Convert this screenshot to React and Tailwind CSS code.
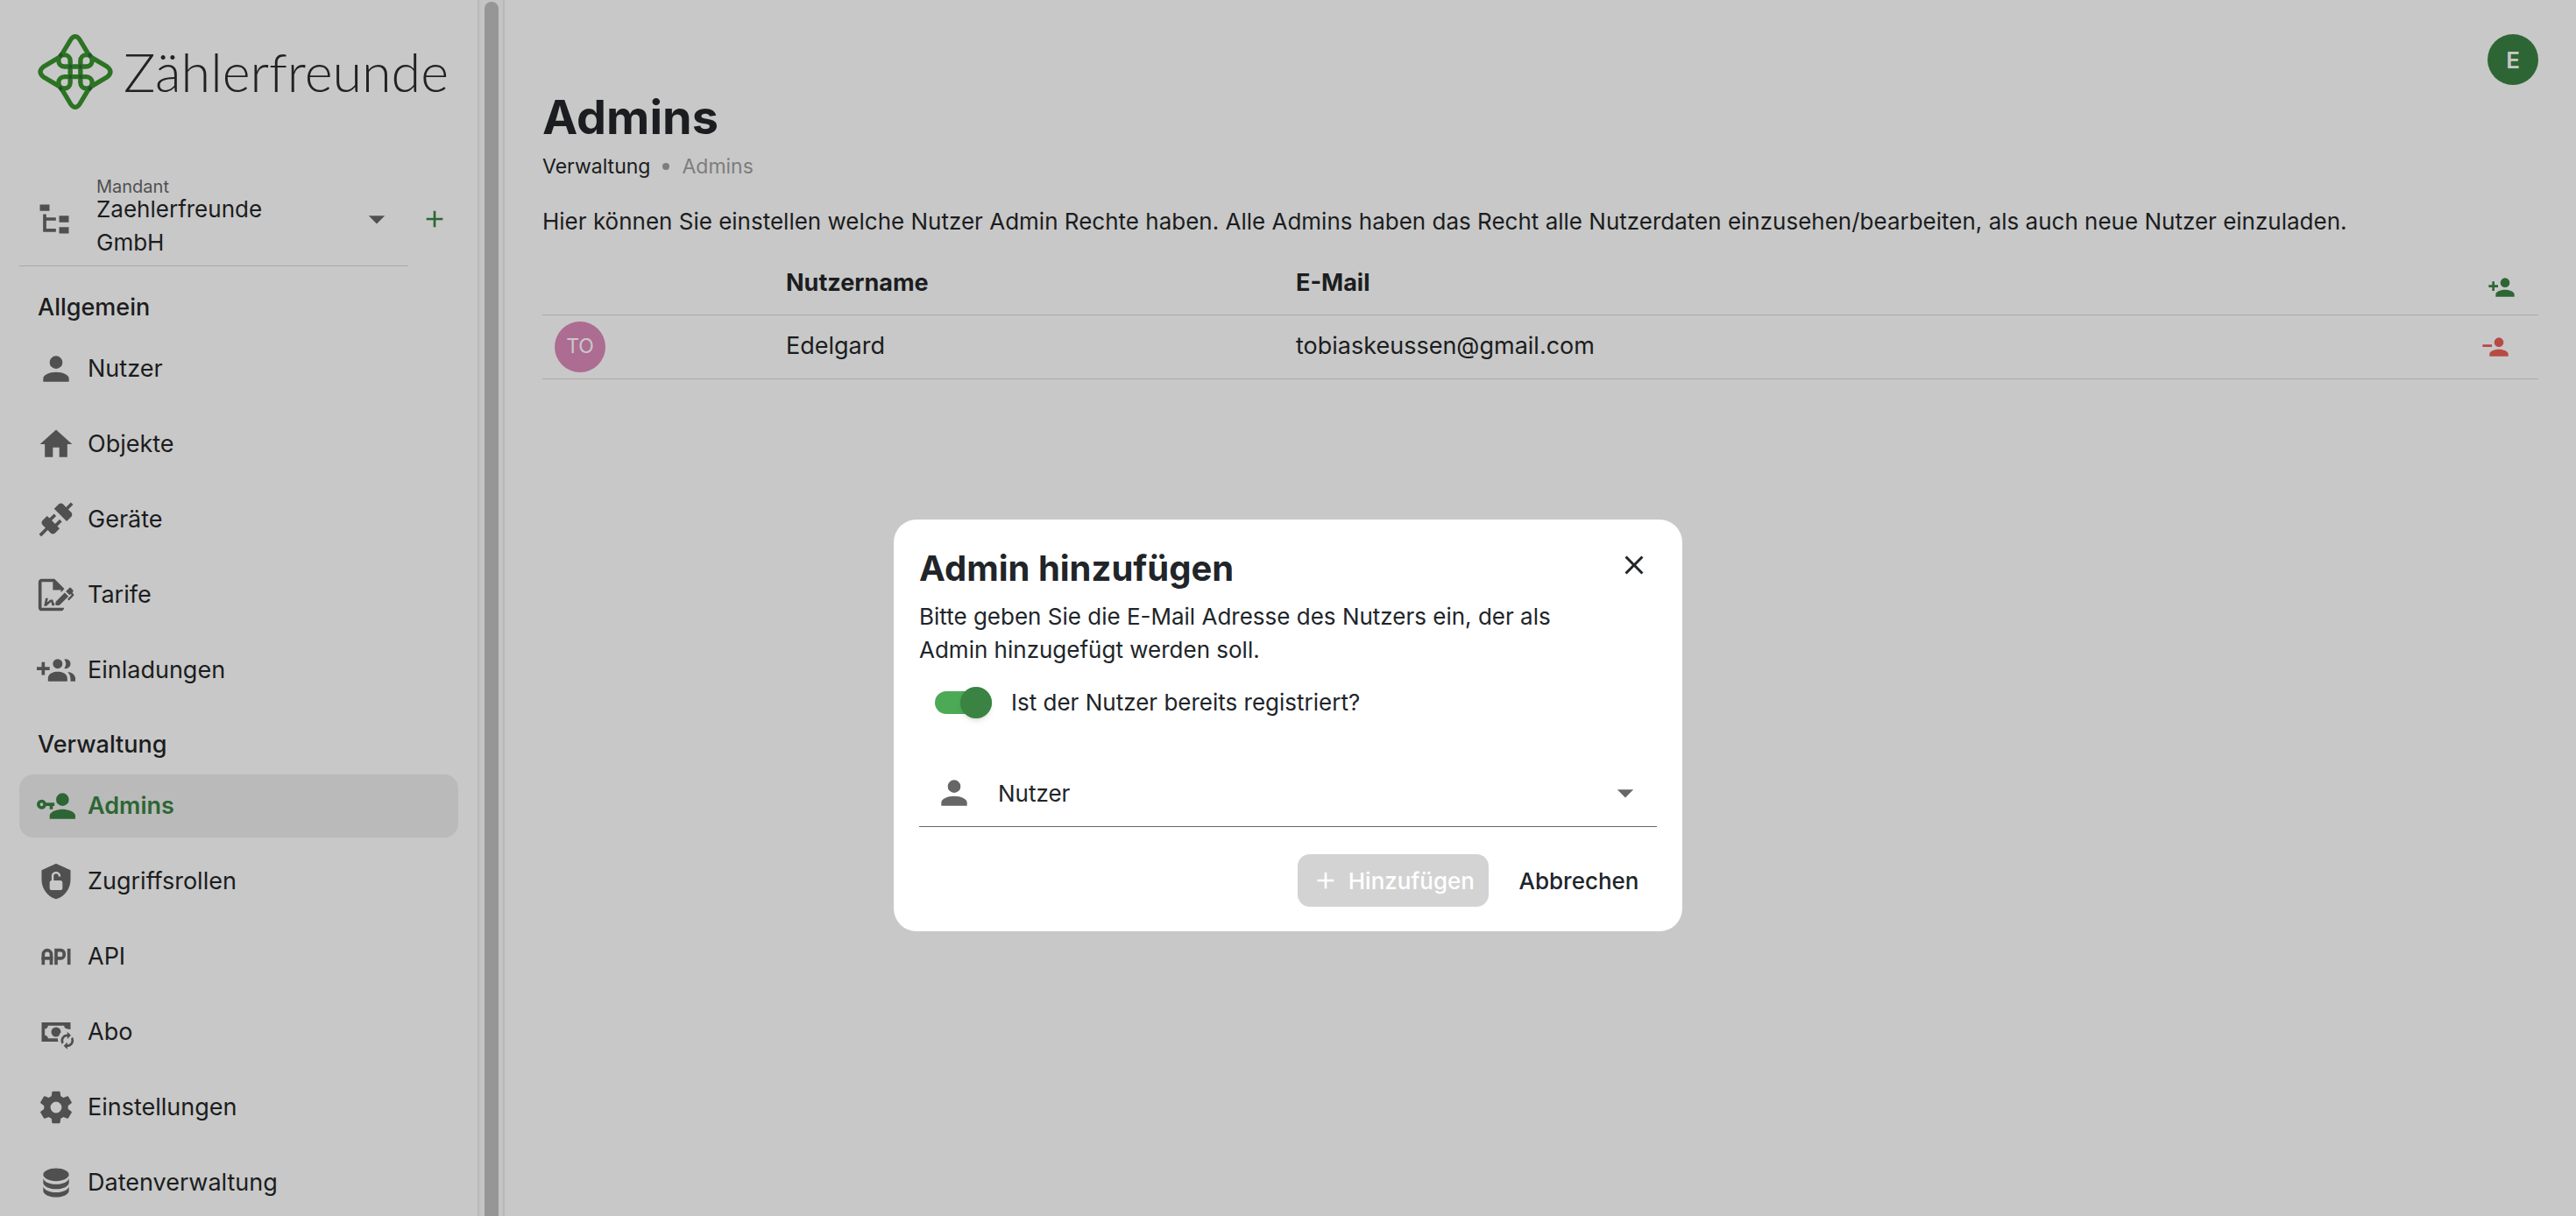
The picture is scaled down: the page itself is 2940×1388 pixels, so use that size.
import React from "react";
import { TbApi } from "react-icons/tb";

const P = {
  tree: "M3,3H9V7H3V3M15,10H21V14H15V10M15,17H21V21H15V17M13,13H7V18H13V20H7L5,20V9H7V11H13V13Z",
  account: "M12,4A4,4 0 0,1 16,8A4,4 0 0,1 12,12A4,4 0 0,1 8,8A4,4 0 0,1 12,4M12,14C16.42,14 20,15.79 20,18V20H4V18C4,15.79 7.58,14 12,14Z",
  home: "M10,20V14H14V20H19V12H22L12,3L2,12H5V20H10Z",
  plug: "M21.4 7.5C22.2 8.3 22.2 9.6 21.4 10.3L18.6 13.1L10.8 5.3L13.6 2.5C14.4 1.7 15.7 1.7 16.4 2.5L18.2 4.3L21.2 1.3L22.6 2.7L19.6 5.7L21.4 7.5M15.6 13.3L14.2 11.9L11.4 14.7L9.3 12.6L12.1 9.8L10.7 8.4L7.9 11.2L6.4 9.8L3.6 12.6C2.8 13.4 2.8 14.7 3.6 15.4L5.4 17.2L1.4 21.2L2.8 22.6L6.8 18.6L8.6 20.4C9.4 21.2 10.7 21.2 11.4 20.4L14.2 17.6L12.8 16.2L15.6 13.3Z",
  fileSign: "M19.7 12.9L14 18.6H11.7V16.3L17.4 10.6L19.7 12.9M23.1 12.1C23.1 12.4 22.8 12.7 22.5 13L20 15.5L19.1 14.6L21.7 12L21.1 11.4L20.4 12.1L18.1 9.8L20.3 7.7C20.5 7.5 20.9 7.5 21.2 7.7L22.6 9.1C22.8 9.3 22.8 9.7 22.6 10C22.4 10.2 22.2 10.4 22.2 10.6C22.2 10.8 22.4 11 22.6 11.2C22.9 11.5 23.2 11.8 23.1 12.1M3 20V4H10V9H15V10.5L17 8.5V8L11 2H3C1.9 2 1 2.9 1 4V20C1 21.1 1.9 22 3 22H15C16.1 22 17 21.1 17 20H3M11 17.1C10.8 17.1 10.6 17.2 10.5 17.2L10 15H8.5L6.4 16.7L7 14H5.5L4.5 19H6L8.9 16.4L9.5 18.7H10.5L11 18.6V17.1Z",
  group: "M19 17V19H7V17S7 13 13 13 19 17 19 17M16 8A3 3 0 1 0 13 11A3 3 0 0 0 16 8M19.2 13.06A5.6 5.6 0 0 1 21 17V19H24V17S24 13.55 19.2 13.06M18 5A2.91 2.91 0 0 0 17.11 5.14A5 5 0 0 1 17.11 10.86A2.91 2.91 0 0 0 18 11A3 3 0 0 0 18 5M8 10H5V7H3V10H0V12H3V15H5V12H8Z",
  key: "M11 10V12H10V14H8V12H5.83C5.42 13.17 4.31 14 3 14A3 3 0 0 1 0 11A3 3 0 0 1 3 8C4.31 8 5.42 8.83 5.83 10H11M3 10A1 1 0 0 0 2 11A1 1 0 0 0 3 12A1 1 0 0 0 4 11A1 1 0 0 0 3 10M16 14C18.67 14 24 15.34 24 18V20H8V18C8 15.34 13.33 14 16 14M16 12A4 4 0 0 1 12 8A4 4 0 0 1 16 4A4 4 0 0 1 20 8A4 4 0 0 1 16 12Z",
  shield: "M12 1L3 5V11C3 16.5 6.8 21.7 12 23C17.2 21.7 21 16.5 21 11V5L12 1M16 16.3C16 16.9 15.4 17.5 14.7 17.5H9.2C8.6 17.5 8 16.9 8 16.2V12.7C8 12.1 8.6 11.5 9.2 11.5V8.5C9.2 7.1 10.6 6 12 6S14.8 7.1 14.8 8.5V9H13.5V8.5C13.5 7.7 12.8 7.2 12 7.2S10.5 7.7 10.5 8.5V11.5H14.8C15.4 11.5 16 12.1 16 12.8V16.3Z",
  cash: "M3 6V18H13.32C13.1 17.33 13 16.66 13 16H7C7 14.9 6.11 14 5 14V10C6.11 10 7 9.11 7 8H17C17 9.11 17.9 10 19 10V10.06C19.67 10.06 20.34 10.18 21 10.4V6H3M12 9A3 3 0 0 0 9 12A3 3 0 0 0 12 15C12.6 15 13.2 14.8 13.7 14.4C14 13.6 14.4 12.9 15 12.2V12A3 3 0 0 0 12 9M19 11.8L21.25 14.05L19 16.3V14.8C17.62 14.8 16.5 15.92 16.5 17.3C16.5 17.7 16.59 18.08 16.76 18.42L15.67 19.51C15.25 18.88 15 18.12 15 17.3C15 15.09 16.79 13.3 19 13.3V11.8M19 22.8L16.75 20.55L19 18.3V19.8C20.38 19.8 21.5 18.68 21.5 17.3C21.5 16.9 21.41 16.52 21.24 16.18L22.33 15.09C22.75 15.72 23 16.48 23 17.3C23 19.51 21.21 21.3 19 21.3V22.8Z",
  cog: "M12,15.5A3.5,3.5 0 0,1 8.5,12A3.5,3.5 0 0,1 12,8.5A3.5,3.5 0 0,1 15.5,12A3.5,3.5 0 0,1 12,15.5M19.43,12.97C19.47,12.65 19.5,12.33 19.5,12C19.5,11.67 19.47,11.34 19.43,11L21.54,9.37C21.73,9.22 21.78,8.95 21.66,8.73L19.66,5.27C19.54,5.05 19.27,4.96 19.05,5.05L16.56,6.05C16.04,5.66 15.5,5.32 14.87,5.07L14.5,2.42C14.46,2.18 14.25,2 14,2H10C9.75,2 9.54,2.18 9.5,2.42L9.13,5.07C8.5,5.32 7.96,5.66 7.44,6.05L4.95,5.05C4.73,4.96 4.46,5.05 4.34,5.27L2.34,8.73C2.21,8.95 2.27,9.22 2.46,9.37L4.57,11C4.53,11.34 4.5,11.67 4.5,12C4.5,12.33 4.53,12.65 4.57,12.97L2.46,14.63C2.27,14.78 2.21,15.05 2.34,15.27L4.34,18.73C4.46,18.95 4.73,19.03 4.95,18.95L7.44,17.94C7.96,18.34 8.5,18.68 9.13,18.93L9.5,21.58C9.54,21.82 9.75,22 10,22H14C14.25,22 14.46,21.82 14.5,21.58L14.87,18.93C15.5,18.67 16.04,18.34 16.56,17.94L19.05,18.95C19.27,19.03 19.54,18.95 19.66,18.73L21.66,15.27C21.78,15.05 21.73,14.78 21.54,14.63L19.43,12.97Z",
  database: "M12,3C7.58,3 4,4.79 4,7C4,9.21 7.58,11 12,11C16.42,11 20,9.21 20,7C20,4.79 16.42,3 12,3M4,9V12C4,14.21 7.58,16 12,16C16.42,16 20,14.21 20,12V9C20,11.21 16.42,13 12,13C7.58,13 4,11.21 4,9M4,14V17C4,19.21 7.58,21 12,21C16.42,21 20,19.21 20,17V14C20,16.21 16.42,18 12,18C7.58,18 4,16.21 4,14Z",
  userPlus: "M15,14C12.33,14 7,15.33 7,18V20H23V18C23,15.33 17.67,14 15,14M6,10V7H4V10H1V12H4V15H6V12H9V10M15,12A4,4 0 0,0 19,8A4,4 0 0,0 15,4A4,4 0 0,0 11,8A4,4 0 0,0 15,12Z",
  userMinus: "M15,14C12.33,14 7,15.33 7,18V20H23V18C23,15.33 17.67,14 15,14M1,10V12H9V10M15,12A4,4 0 0,0 19,8A4,4 0 0,0 15,4A4,4 0 0,0 11,8A4,4 0 0,0 15,12Z",
  plus: "M19,13H13V19H11V13H5V11H11V5H13V11H19V13Z",
  close: "M19,6.41L17.59,5L12,10.59L6.41,5L5,6.41L10.59,12L5,17.59L6.41,19L12,13.41L17.59,19L19,17.59L13.41,12L19,6.41Z",
  caret: "M7,10L12,15L17,10H7Z",
};

function Icon({ name, className }) {
  return (
    <svg viewBox="0 0 24 24" fill="currentColor" aria-hidden="true" className={"shrink-0 " + className}>
      <path d={P[name]} />
    </svg>
  );
}

function Logo() {
  return (
    <a href="#" className="flex items-center gap-3 pt-[39px] pl-[43px] text-[#222223]">
      <svg viewBox="38 57 257 258" className="size-[86px] shrink-0" fill="none" stroke="#2c7324" strokeWidth="16" strokeLinejoin="round" aria-hidden="true">
        <path d="M118 130 L151 75 Q166 55 181 75 L214 130" />
        <path d="M118 242 L151 297 Q166 317 181 297 L214 242" />
        <path d="M112 136 L58 168 Q35 186 58 204 L112 236" />
        <path d="M221 136 L275 168 Q298 186 275 204 L221 236" />
        <path d="M129 168 H204 A20 20 0 1 0 184 148 V223 A20 20 0 1 0 204 203 H129 A20 20 0 1 0 149 223 V148 A20 20 0 1 0 129 168 Z" />
        <path d="M144 168 H154 M179 168 H189 M144 203 H154 M179 203 H189 M112 134 L120 124 M213 124 L221 134 M112 238 L120 248 M213 248 L221 238" stroke="#24502c" strokeWidth="13" />
      </svg>
      <span className="font-['Lato',sans-serif] text-[61px] leading-[86px] font-light">Zählerfreunde</span>
    </a>
  );
}

const general = [
  ["Nutzer", "account"],
  ["Objekte", "home"],
  ["Geräte", "plug"],
  ["Tarife", "fileSign"],
  ["Einladungen", "group"],
];
const admin = [
  ["Admins", "key"],
  ["Zugriffsrollen", "shield"],
  ["API", "api"],
  ["Abo", "cash"],
  ["Einstellungen", "cog"],
  ["Datenverwaltung", "database"],
];

function NavGroup({ title, items, active }) {
  return (
    <section>
      <h2 className="pl-[21px] text-[27px] leading-[38px] font-medium">{title}</h2>
      <ul className="mt-[15px] flex flex-col gap-[14px]">
        {items.map(([label, icon]) => (
          <li key={label}>
            <a
              href="#"
              aria-current={label === active ? "page" : undefined}
              className={
                "flex h-[72px] items-center gap-[14px] rounded-2xl pl-5 text-[27px] " +
                (label === active ? "bg-[#bababa] font-semibold text-[#2d6634]" : "")
              }
            >
              {icon === "api" ? (
                <TbApi className="size-11 shrink-0 text-[#505050]" strokeLinecap="square" strokeLinejoin="miter" aria-hidden="true" />
              ) : (
                <Icon name={icon} className={label === active ? "size-11" : "size-11 text-[#505050]"} />
              )}
              {label}
            </a>
          </li>
        ))}
      </ul>
    </section>
  );
}

function Sidebar() {
  return (
    <aside className="flex w-[576px] shrink-0 overflow-hidden border-r-2 border-[#b8b8b8]">
      <div className="flex-1">
        <Logo />
        <div className="mt-[78px] ml-[22px] flex items-center">
          <button type="button" className="flex w-[444px] items-center border-b border-[#aaaaaa] pb-[7px] pl-[18px] text-left">
            <Icon name="tree" className="size-11 text-[#505050]" />
            <span className="ml-[26px] flex-1">
              <span className="-mb-[3px] block text-[20px] leading-5 text-[#505050]">Mandant</span>
              <span className="block text-[26px] leading-[38px]">
                Zaehlerfreunde
                <br />
                GmbH
              </span>
            </span>
            <Icon name="caret" className="mr-[14px] size-11 text-[#505050]" />
          </button>
          <button type="button" aria-label="Mandant hinzufügen" className="ml-[14px] pb-2 text-[#2d6634]">
            <Icon name="plus" className="size-8" />
          </button>
        </div>
        <nav className="mt-7 mr-[22px] ml-[22px] flex flex-col gap-[30px]">
          <NavGroup title="Allgemein" items={general} />
          <NavGroup title="Verwaltung" items={admin} active="Admins" />
        </nav>
      </div>
      <div className="flex w-[29px] shrink-0 justify-center border-l-2 border-[#b8b8b8] bg-[#c4c4c4] pt-[2px]">
        <div className="w-4 rounded-t-full bg-[#969696]" />
      </div>
    </aside>
  );
}

function Main() {
  return (
    <main className="min-w-0 flex-1 pt-[39px] pr-[43px] pl-[43px]">
      <header className="flex items-start justify-between">
        <div className="pt-[57px]">
          <h1 className="text-[54px] leading-[76px] font-bold">Admins</h1>
          <nav aria-label="Breadcrumb" className="mt-[2px] flex items-center gap-[14px] text-[23px] leading-8">
            <a href="#">Verwaltung</a>
            <span className="size-2 rounded-full bg-[#7d7d7d]" />
            <span className="text-[#7d7d7d]">Admins</span>
          </nav>
        </div>
        <button type="button" className="size-[58px] rounded-full bg-[#2d6634] text-[26px] font-semibold text-[#c8c8c8]">E</button>
      </header>
      <p className="mt-7 text-[26px] leading-[38px]">
        Hier können Sie einstellen welche Nutzer Admin Rechte haben. Alle Admins haben das Recht alle Nutzerdaten einzusehen/bearbeiten, als auch neue Nutzer einzuladen.
      </p>
      <table className="mt-[14px] w-full table-fixed border-collapse text-left text-[27px]">
        <colgroup>
          <col className="w-[264px]" />
          <col className="w-[582px]" />
          <col />
          <col className="w-[96px]" />
        </colgroup>
        <thead>
          <tr className="h-[73px] border-b border-[#aaaaaa]">
            <td />
            <th className="pt-[2px] pl-[14px] font-bold">Nutzername</th>
            <th className="pt-[2px] pl-[14px] font-bold">E-Mail</th>
            <td className="pt-3 pl-[38px]">
              <button type="button" aria-label="Admin hinzufügen" className="block text-[#2d6634]">
                <Icon name="userPlus" className="size-8" />
              </button>
            </td>
          </tr>
        </thead>
        <tbody>
          <tr className="h-[73px] border-b border-[#aaaaaa]">
            <td className="pl-[14px]">
              <span className="flex size-[58px] items-center justify-center rounded-full bg-[#ad6c92] text-[23px] text-[#c8c8c8]">TO</span>
            </td>
            <td className="pl-[14px]">Edelgard</td>
            <td className="pl-[14px]">tobiaskeussen@gmail.com</td>
            <td className="pl-[31px]">
              <button type="button" aria-label="Admin entfernen" className="block text-[#b84a44]">
                <Icon name="userMinus" className="size-8" />
              </button>
            </td>
          </tr>
        </tbody>
      </table>
    </main>
  );
}

function AdminDialog() {
  return (
    <div className="fixed inset-0 flex justify-center pt-[593px]">
      <section
        role="dialog"
        aria-modal="true"
        aria-labelledby="dialog-title"
        className="flex w-[900px] flex-col self-start rounded-[26px] bg-white px-[29px] pt-7 pb-7 text-[#212529]"
      >
        <div className="mb-2 flex items-start justify-between">
          <h2 id="dialog-title" className="text-[40px] leading-[56px] font-bold">Admin hinzufügen</h2>
          <button type="button" aria-label="Schließen" className="mt-[6px] mr-2">
            <Icon name="close" className="size-9" />
          </button>
        </div>
        <p className="mr-20 text-[26px] leading-[38px]">Bitte geben Sie die E-Mail Adresse des Nutzers ein, der als Admin hinzugefügt werden soll.</p>
        <label className="mt-[22px] ml-[18px] flex items-center text-[26px] leading-[38px]">
          <input type="checkbox" role="switch" defaultChecked className="peer sr-only" />
          <span className="flex h-[26px] w-[65px] items-center justify-end rounded-full bg-[#4caa57]">
            <span className="size-9 rounded-full bg-[#3a8343] shadow-md" />
          </span>
          <span className="ml-[22px]">Ist der Nutzer bereits registriert?</span>
        </label>
        <button type="button" className="mt-[46px] flex h-[77px] items-center border-b border-[#666666] pl-[18px] text-[26px]">
          <Icon name="account" className="size-11 text-[#666666]" />
          <span className="ml-7 flex-1 text-left">Nutzer</span>
          <Icon name="caret" className="mr-[14px] size-11 text-[#666666]" />
        </button>
        <div className="mt-[31px] flex justify-end gap-[14px] text-[26px] font-medium">
          <button type="button" disabled className="flex h-[60px] items-center gap-[10px] rounded-[14px] bg-[#d3d3d3] px-4 text-white">
            <Icon name="plus" className="size-8" />
            Hinzufügen
          </button>
          <button type="button" className="h-[60px] min-w-[178px] px-[18px]">Abbrechen</button>
        </div>
      </section>
    </div>
  );
}

export default function App() {
  return (
    <div className="flex h-screen overflow-hidden bg-[#c8c8c8] font-['Inter',sans-serif] text-[#1b1d20]">
      <Sidebar />
      <Main />
      <AdminDialog />
    </div>
  );
}
